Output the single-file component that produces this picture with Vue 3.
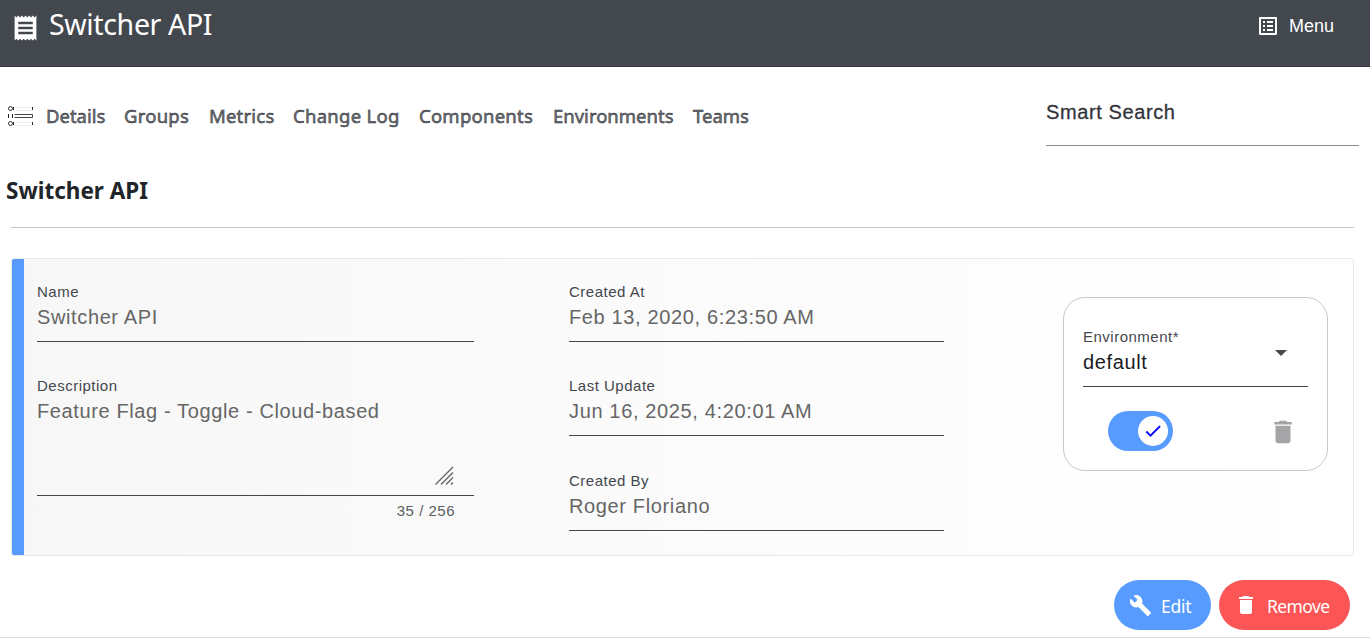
<script setup>
const nav = [
  { label: 'Details', cls: 'n1' },
  { label: 'Groups', cls: 'n2' },
  { label: 'Metrics', cls: 'n3' },
  { label: 'Change Log', cls: 'n4' },
  { label: 'Components', cls: 'n5' },
  { label: 'Environments', cls: 'n6' },
  { label: 'Teams', cls: 'n7' },
]
const facts = [
  { label: 'Created At', value: 'Feb 13, 2020, 6:23:50 AM' },
  { label: 'Last Update', value: 'Jun 16, 2025, 4:20:01 AM' },
  { label: 'Created By', value: 'Roger Floriano' },
]
</script>

<template>
  <div class="page">
    <header class="topbar">
      <div class="brand">
        <svg class="receipt" width="29" height="30" viewBox="0 0 24 24" preserveAspectRatio="none" fill="#fff"><path d="M18 17H6v-2h12v2zm0-4H6v-2h12v2zm0-4H6V7h12v2zM3 22l1.5-1.5L6 22l1.5-1.5L9 22l1.5-1.5L12 22l1.5-1.5L15 22l1.5-1.5L18 22l1.5-1.5L21 22V2l-1.500 1.500L18 2l-1.500 1.500L15 2l-1.500 1.500L12 2l-1.500 1.500L9 2 7.500 3.500 6 2 4.500 3.500 3 2v20z" /></svg>
        <span class="brand-name">Switcher API</span>
      </div>
      <div class="menu">
        <svg width="24" height="24" viewBox="0 0 24 24" fill="#fff"><path d="M11 7h6v2h-6zm0 4h6v2h-6zm0 4h6v2h-6zM7 7h2v2H7zm0 4h2v2H7zm0 4h2v2H7zM20.100 3H3.900c-.5 0-.9.400-.9.900v16.200c0 .4.400.9.900.9h16.200c.4 0 .9-.5.900-.9V3.900c0-.5-.5-.9-.9-.9zM19 19H5V5h14v14z" /></svg>
        <span>Menu</span>
      </div>
    </header>

    <div class="toolbar">
      <nav class="nav">
        <svg class="list-icon" width="26" height="22" viewBox="0 0 26 22" fill="none">
          <path d="M6 1.500H24M6 4.500H24M6 16.500H24M6 19.500H24" stroke="#eee" />
          <path d="M6.500 8.500H24.500V11.500H6.500" stroke="#444" />
          <path d="M.5 8v4M4.500 8v4" stroke="#222" />
          <path d="M24.500 1v3M24.500 16v3M5.500 1v3M5.500 16v3" stroke="#322" />
          <circle cx="2.500" cy="2.500" r="2" stroke="#333" />
          <circle cx="2.500" cy="17.500" r="2" stroke="#333" />
        </svg>
        <a v-for="n in nav" :key="n.label" :class="n.cls"><span>{{ n.label }}</span></a>
      </nav>
      <div class="search">Smart Search</div>
    </div>

    <h1 class="title">Switcher API</h1>

    <section class="card">
      <div class="col left">
        <div class="field name">
          <label>Name</label>
          <div class="value">Switcher API</div>
        </div>
        <div class="field desc">
          <label>Description</label>
          <div class="value">Feature Flag - Toggle - Cloud-based</div>
          <svg class="grip" width="19" height="19" viewBox="0 0 19 19" stroke="#666" stroke-width="1.400"><path d="M.5 18.500L18 1M6 18.500L18 6.500M11 18.500L18 11.500M16 18.500l2-2" /></svg>
        </div>
        <div class="count">35 / 256</div>
      </div>
      <div class="col middle">
        <div v-for="f in facts" :key="f.label" class="field">
          <label>{{ f.label }}</label>
          <div class="value">{{ f.value }}</div>
        </div>
      </div>
      <div class="env">
        <div class="field select">
          <label>Environment*</label>
          <div class="value">default</div>
          <svg class="caret" width="12" height="6" viewBox="0 0 12 6"><path d="M0 0h12L6 6z" fill="#44474e" /></svg>
        </div>
        <div class="env-row">
          <div class="toggle"><div class="knob"><svg width="20" height="20" viewBox="0 0 24 24" fill="#00f" stroke="#00f" stroke-width=".5"><path d="M9 16.200L4.800 12l-1.400 1.400L9 19 21 7l-1.400-1.400L9 16.200z" /></svg></div></div>
          <svg class="trash" width="30" height="30" viewBox="0 0 24 24" fill="#a5a5a7"><path d="M6 19c0 1.100.9 2 2 2h8c1.100 0 2-.9 2-2V7H6v12zM19 4h-3.500l-1-1h-5l-1 1H5v2h14V4z" /></svg>
        </div>
      </div>
    </section>

    <div class="actions">
      <button class="btn edit">
        <svg width="23" height="23" viewBox="0 0 24 24" fill="#fff"><path d="M22.700 19l-9.100-9.100c.9-2.300.4-5-1.500-6.900-2-2-5-2.400-7.400-1.300L9 6 6 9 1.600 4.700C.4 7.100.9 10.100 2.900 12.100c1.900 1.900 4.600 2.400 6.900 1.500l9.100 9.100c.4.4 1 .4 1.400 0l2.300-2.300c.5-.4.5-1.100.1-1.400z" /></svg>
        <span>Edit</span>
      </button>
      <button class="btn remove">
        <svg width="24" height="24" viewBox="0 0 24 24" fill="#fff"><path d="M6 19c0 1.100.9 2 2 2h8c1.100 0 2-.9 2-2V7H6v12zM19 4h-3.500l-1-1h-5l-1 1H5v2h14V4z" /></svg>
        <span>Remove</span>
      </button>
    </div>
  </div>
</template>

<style>
body { background: #fff; }
</style>

<style scoped>
.page {
  width: 1370px;
  height: 638px;
  box-sizing: border-box;
  border-bottom: 1px solid #dedede;
  overflow: hidden;
  display: flex;
  flex-direction: column;
  font-family: "Liberation Sans", Arial, sans-serif;
}
.topbar {
  height: 67px;
  flex: none;
  box-sizing: border-box;
  background: #43484f;
  border-bottom: 1px solid #36343c;
  display: flex;
  justify-content: space-between;
  color: #fff;
}
.brand { display: flex; padding: 13px 0 0 11px; }
.brand-name {
  font: 28.500px/40px "Noto Sans", sans-serif;
  letter-spacing: -0.350px;
  margin: -9px 0 0 9px;
  white-space: nowrap;
}
.menu {
  display: flex;
  width: 114px;
  padding-top: 14px;
  font: 18px/24px "Liberation Sans", sans-serif;
}
.menu svg { margin-right: 9px; }
.toolbar {
  display: flex;
  justify-content: space-between;
  flex: none;
  height: 79px;
  padding: 0 11px 0 8px;
}
.nav { display: flex; padding-top: 35px; height: 30px; }
.list-icon { margin: 4px 12px 0 0; }
.nav a {
  font: 18.500px/28px "Noto Sans", sans-serif;
  color: #75777b;
  -webkit-text-stroke: 0.450px #14171f;
  white-space: nowrap;
}
.n1 { width: 78px; }
.nav .n2 { width: 85px; letter-spacing: 0.250px; }
.nav .n3 { width: 84px; letter-spacing: 0.200px; }
.nav .n4 { width: 126px; letter-spacing: 0.280px; }
.nav .n5 { width: 134px; letter-spacing: 0.240px; }
.n6 { width: 140px; }
.n7 { width: 60px; }
.search {
  width: 313px;
  box-sizing: border-box;
  border-bottom: 1px solid #909094;
  padding-top: 33px;
  font-size: 20px;
  line-height: 24px;
  letter-spacing: 0.600px;
  color: #33343b;
  -webkit-text-stroke: 0.300px #33343b;
}
.title {
  margin: 0 16px 0 11px;
  height: 82px;
  flex: none;
  box-sizing: border-box;
  border-bottom: 1px solid #c6c6c6;
  padding-top: 30px;
  text-indent: -5px;
  font: bold 22.500px/30px "Noto Sans", sans-serif;
  color: #212529;
}
.card {
  margin: 30px 16px 0 11px;
  height: 298px;
  flex: none;
  box-sizing: border-box;
  border: 1px solid #e8e8e8;
  border-radius: 3px;
  background: linear-gradient(90deg, #579bff 12px, #f7f7f7 12px, #fff 100%);
  display: flex;
  padding-left: 25px;
}
.col { display: flex; flex-direction: column; }
.left { width: 437px; margin-right: 95px; }
.middle { width: 375px; margin-right: 119px; }
.field {
  position: relative;
  height: 94.250px;
  flex: none;
  box-sizing: border-box;
  padding-top: 23px;
}
.field::after {
  content: "";
  position: absolute;
  left: 0;
  right: 0;
  bottom: 11.250px;
  height: 1px;
  background: #44474e;
}
label {
  display: block;
  font-size: 15px;
  line-height: 20px;
  letter-spacing: 0.500px;
  color: #44474e;
}
.value {
  font-size: 20px;
  line-height: 30px;
  letter-spacing: 0.640px;
  color: #666;
  white-space: nowrap;
}
.left .value, .select .value { letter-spacing: 0.620px; }
.field.desc { height: 154px; }
.grip { position: absolute; left: 398px; top: 113px; }
.count {
  font-size: 15px;
  line-height: 20px;
  letter-spacing: 0.500px;
  color: #5c5e62;
  text-align: right;
  padding-right: 19px;
  margin-top: -6px;
}
.env {
  width: 265px;
  height: 174px;
  box-sizing: border-box;
  margin-top: 38px;
  border: 1px solid #c8c8c8;
  border-radius: 22px;
  background: #fff;
  padding: 6px 19px;
}
.select .value { color: #1a1b1f; }
.caret { position: absolute; left: 192px; top: 46px; }
.env-row { display: flex; justify-content: space-between; align-items: center; padding: 12.750px 10px 0 25px; }
.trash { margin-top: 2px; }
.toggle {
  width: 65px;
  height: 40px;
  box-sizing: border-box;
  border-radius: 20px;
  padding: 5px;
  background: #579bff;
}
.knob {
  width: 30px;
  height: 30px;
  border-radius: 50%;
  background: #fff;
  margin-left: auto;
  display: flex;
  align-items: center;
  justify-content: center;
}
.actions { display: flex; justify-content: flex-end; gap: 8px; padding: 24px 20px 0 0; }
.btn {
  height: 50px;
  border: 0;
  border-radius: 25px;
  display: flex;
  align-items: center;
  color: #fff;
  font: 17.500px/28px "Noto Sans", sans-serif;
  letter-spacing: -0.250px;
  padding: 0 0 0 15px;
}
.btn svg { flex: none; }
.edit { width: 97px; background: #579bff; }
.edit span { margin: 2px 0 0 9px; }
.remove { width: 131px; background: #fc5555; }
.remove span { margin: 2px 0 0 9px; letter-spacing: -0.600px; }
</style>
